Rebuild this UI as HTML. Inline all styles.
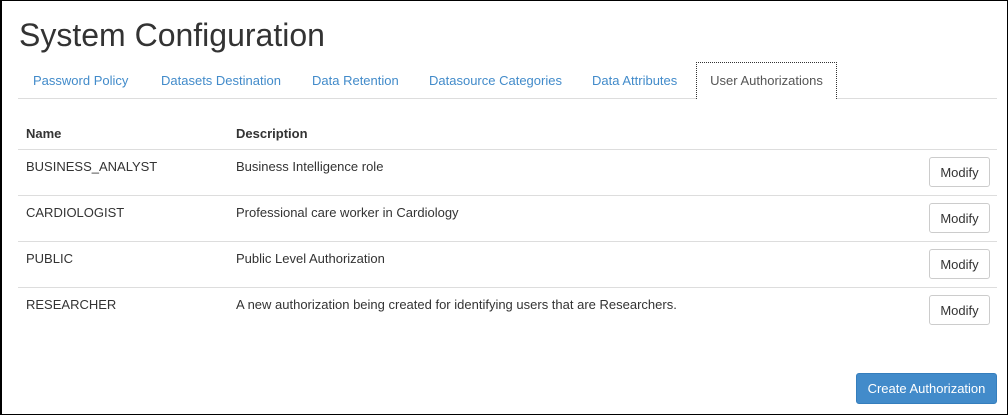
<!DOCTYPE html>
<html><head><meta charset="utf-8"><style>
*{margin:0;padding:0;box-sizing:border-box}
body{width:1008px;height:415px;background:#fff;font-family:"Liberation Sans",Arial,sans-serif;color:#333;position:relative;overflow:hidden}
.frame{position:absolute;left:0;top:0;width:1008px;height:415px;border:1px solid #000;border-left-width:2px}
.a{position:absolute;white-space:nowrap}
h1{position:absolute;left:19px;top:17px;font-size:32px;font-weight:normal;color:#333;white-space:nowrap}
.tab{position:absolute;top:73px;font-size:13px;color:#428bca}
.line{position:absolute;left:18px;width:979px;height:1px;background:#ddd}
.cell{position:absolute;font-size:13px;color:#333}
.btn{position:absolute;left:929px;width:61px;height:30px;border:1px solid #ccc;border-radius:3px;font-size:13px;text-align:center;line-height:30px;color:#333;background:#fff}
</style></head><body>
<div class="frame"></div>
<h1>System Configuration</h1>
<div class="tab a" style="left:33px">Password Policy</div>
<div class="tab a" style="left:161px">Datasets Destination</div>
<div class="tab a" style="left:312px">Data Retention</div>
<div class="tab a" style="left:429px">Datasource Categories</div>
<div class="tab a" style="left:592px">Data Attributes</div>
<div class="line" style="top:98px"></div>
<div class="a" style="left:696px;top:62px;width:141px;height:37px;border:1px dotted #333;border-bottom:none;background:#fff;font-size:13px;color:#555;text-align:center;line-height:35px">User Authorizations</div>
<div class="cell a" style="left:26px;top:126px;font-weight:bold">Name</div>
<div class="cell a" style="left:236px;top:126px;font-weight:bold">Description</div>
<div class="line" style="top:149px"></div>
<div class="cell a" style="left:26px;top:159px">BUSINESS_ANALYST</div>
<div class="cell a" style="left:236px;top:159px">Business Intelligence role</div>
<div class="btn" style="top:157px">Modify</div>
<div class="line" style="top:195px"></div>
<div class="cell a" style="left:26px;top:205px">CARDIOLOGIST</div>
<div class="cell a" style="left:236px;top:205px">Professional care worker in Cardiology</div>
<div class="btn" style="top:203px">Modify</div>
<div class="line" style="top:241px"></div>
<div class="cell a" style="left:26px;top:251px">PUBLIC</div>
<div class="cell a" style="left:236px;top:251px">Public Level Authorization</div>
<div class="btn" style="top:249px">Modify</div>
<div class="line" style="top:287px"></div>
<div class="cell a" style="left:26px;top:297px">RESEARCHER</div>
<div class="cell a" style="left:236px;top:297px">A new authorization being created for identifying users that are Researchers.</div>
<div class="btn" style="top:295px">Modify</div>
<div class="a" style="left:856px;top:373px;width:141px;height:31px;background:#428bca;border:1px solid #357ebd;border-radius:3px;color:#fff;font-size:13px;text-align:center;line-height:29px">Create Authorization</div>
</body></html>
